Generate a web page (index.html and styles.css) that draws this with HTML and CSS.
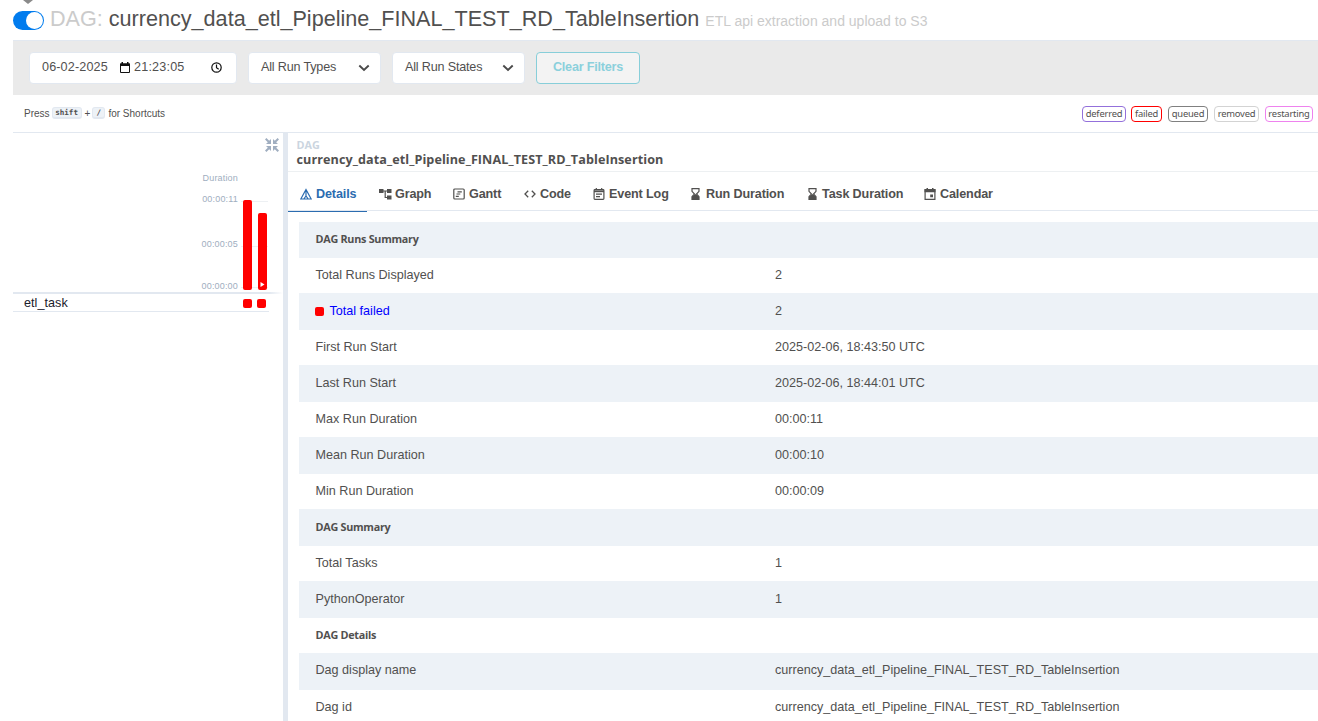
FILE: index.html
```html
<!DOCTYPE html>
<html lang="en">
<head>
<meta charset="utf-8">
<title>currency_data_etl_Pipeline_FINAL_TEST_RD_TableInsertion - Grid</title>
<link rel="stylesheet" href="styles.css">
</head>
<body>
<div class="page">
  <header class="dag-header">
    <span class="caret"></span>
    <span class="switch"><span class="knob"></span></span>
    <h1 class="title"><span class="muted">DAG:</span> <span class="dag-name">currency_data_etl_Pipeline_FINAL_TEST_RD_TableInsertion</span></h1>
    <span class="desc">ETL api extraction and upload to S3</span>
  </header>

  <section class="filters">
    <div class="field datetime">
      <span class="date">06-02-2025</span>
      <svg class="cal" width="10" height="11" viewBox="0 0 10 11"><path d="M.5 2h9v8.500h-9z" fill="none" stroke="#111"/><path d="M0 1.500h10V4H0zM1.500 0h1.500v2H1.500zM7 0h1.500v2H7z" fill="#111"/></svg>
      <span class="time">21:23:05</span>
      <svg class="clock" width="11" height="11" viewBox="0 0 11 11" fill="none" stroke="#111" stroke-width="1.200"><circle cx="5.500" cy="5.500" r="4.700"/><path d="M5.500 2.500v3.200l2.200 1.500"/></svg>
    </div>
    <div class="field select types"><span>All Run Types</span><svg width="12" height="8" viewBox="0 0 12 8"><path d="M1.300 1.500L6 6l4.700-4.500" fill="none" stroke="#4a4a4a" stroke-width="1.900"/></svg></div>
    <div class="field select states"><span>All Run States</span><svg width="12" height="8" viewBox="0 0 12 8"><path d="M1.300 1.500L6 6l4.700-4.500" fill="none" stroke="#4a4a4a" stroke-width="1.900"/></svg></div>
    <button class="clear">Clear Filters</button>
  </section>

  <section class="toolbar">
    <div class="shortcuts"><span>Press</span><kbd class="k-shift">shift</kbd><span>+</span><kbd class="k-slash">/</kbd><span class="for">for Shortcuts</span></div>
    <div class="legend">
      <span class="state deferred">deferred</span>
      <span class="state failed">failed</span>
      <span class="state queued">queued</span>
      <span class="state removed">removed</span>
      <span class="state restarting">restarting</span>
    </div>
  </section>

  <main class="main">
    <aside class="grid">
      <div class="collapse">
        <svg width="14" height="14" viewBox="0 0 14 14"><path d="M.7.7L4 4M13.300.7L10 4M.7 13.300L4 10M13.300 13.300L10 10" fill="none" stroke="#a0aec0" stroke-width="2"/><path d="M6 1v5H1L2.800 4.200 4.200 2.800zM8 1v5h5l-1.800-1.800-1.400-1.400zM6 13V8H1l1.800 1.800 1.400 1.400zM8 13V8h5l-1.800 1.800-1.400 1.400z" fill="#a0aec0"/></svg>
      </div>
      <div class="chart">
        <div class="axis">
          <span class="label">Duration</span>
          <span class="tick">00:00:11</span>
          <span class="tick">00:00:05</span>
          <span class="tick">00:00:00</span>
        </div>
        <div class="plot">
          <div class="bar tall"></div>
          <div class="bar short"><svg width="5" height="5" viewBox="0 0 5 5"><path d="M.5 0L4.500 2.500L.5 5z" fill="#fff"/></svg></div>
        </div>
      </div>
      <div class="task-row"><span class="task-name">etl_task</span><span class="cell"></span><span class="cell"></span></div>
    </aside>
    <div class="divider"></div>
    <section class="details">
      <div class="crumb">
        <span class="crumb-label">DAG</span>
        <span class="crumb-name">currency_data_etl_Pipeline_FINAL_TEST_RD_TableInsertion</span>
      </div>
      <nav class="tabs">
        <a class="tab w1 active"><svg width="12" height="12" viewBox="0 0 12 12" fill="none" stroke="currentColor" stroke-width="1.200"><path d="M6 1.500L11.200 11H.8zM6 2v6M3.800 11L6 8l2.200 3"/></svg><span>Details</span></a>
        <a class="tab w2"><svg width="13" height="12" viewBox="0 0 13 12" fill="currentColor"><path d="M0 1h4.500v4H0zM8 1h4.500v4H8zM8 7.500h4.500v4H8z"/><path d="M4 3h4.500M6.200 3v6.500h2.300" fill="none" stroke="currentColor" stroke-width="1.200"/></svg><span>Graph</span></a>
        <a class="tab w3"><svg width="12" height="12" viewBox="0 0 12 12" fill="none" stroke="currentColor" stroke-width="1.200"><rect x=".8" y="1" width="10.400" height="10" rx="1"/><path d="M4.500 3.800h4.300M3.500 6h3.800M2.800 8.300h3"/></svg><span>Gantt</span></a>
        <a class="tab w4"><svg width="12" height="12" viewBox="0 0 12 12" fill="none" stroke="currentColor" stroke-width="1.300"><path d="M4.200 2.800L1 6l3.200 3.200M7.800 2.800L11 6 7.800 9.200"/></svg><span>Code</span></a>
        <a class="tab w5"><svg width="12" height="12" viewBox="0 0 12 12" fill="none" stroke="currentColor" stroke-width="1.200"><rect x="1.100" y="1.600" width="9.800" height="9.800" rx=".8"/><path d="M1 3.300h10" stroke-width="1.800"/><path d="M3.300 0v2M8.700 0v2M3 6.200h6M3 8.600h4"/></svg><span>Event Log</span></a>
        <a class="tab w6"><svg width="9" height="12" viewBox="0 0 9 12"><path d="M1 .7h7v2.600L5.500 6 8 8.700v2.600H1V8.700L3.500 6 1 3.300z" fill="none" stroke="currentColor" stroke-width="1.200"/><path d="M4.500 6L8 8.500v3H1v-3z" fill="currentColor"/></svg><span>Run Duration</span></a>
        <a class="tab w7"><svg width="9" height="12" viewBox="0 0 9 12"><path d="M1 .7h7v2.600L5.500 6 8 8.700v2.600H1V8.700L3.500 6 1 3.300z" fill="none" stroke="currentColor" stroke-width="1.200"/><path d="M4.500 6L8 8.500v3H1v-3z" fill="currentColor"/></svg><span>Task Duration</span></a>
        <a class="tab w8"><svg width="12" height="12" viewBox="0 0 12 12"><path d="M1.100 1.700h9.800v9.700H1.100z" fill="none" stroke="currentColor" stroke-width="1.200"/><path d="M.5 1.200h11v3H.5zM2.500 0H4v2H2.500zM8 0h1.500v2H8zM6.200 6.500H9v2.800H6.200z" fill="currentColor"/></svg><span>Calendar</span></a>
      </nav>
      <div class="table">
        <div class="row first head"><span>DAG Runs Summary</span></div>
        <div class="row"><span class="key">Total Runs Displayed</span><span>2</span></div>
        <div class="row"><span class="key link"><i class="dot"></i>Total failed</span><span>2</span></div>
        <div class="row"><span class="key">First Run Start</span><span>2025-02-06, 18:43:50 UTC</span></div>
        <div class="row"><span class="key">Last Run Start</span><span>2025-02-06, 18:44:01 UTC</span></div>
        <div class="row"><span class="key">Max Run Duration</span><span>00:00:11</span></div>
        <div class="row"><span class="key">Mean Run Duration</span><span>00:00:10</span></div>
        <div class="row"><span class="key">Min Run Duration</span><span>00:00:09</span></div>
        <div class="row head"><span>DAG Summary</span></div>
        <div class="row"><span class="key">Total Tasks</span><span>1</span></div>
        <div class="row"><span class="key">PythonOperator</span><span>1</span></div>
        <div class="row head"><span>DAG Details</span></div>
        <div class="row up"><span class="key">Dag display name</span><span>currency_data_etl_Pipeline_FINAL_TEST_RD_TableInsertion</span></div>
        <div class="row"><span class="key">Dag id</span><span>currency_data_etl_Pipeline_FINAL_TEST_RD_TableInsertion</span></div>
      </div>
    </section>
  </main>
</div>
</body>
</html>
```
FILE: styles.css
```css
* { box-sizing: border-box; }
html, body { margin: 0; height: 100%; overflow: hidden; }
body {
  background: #fff;
  color: #51504f;
  font-family: "Liberation Sans", Arial, sans-serif;
  font-size: 12.6px;
}
svg { display: block; flex: none; }
.page { height: 721px; padding-left: 13px; display: flex; flex-direction: column; }

.dag-header { position: relative; height: 40px; flex: none; display: flex; white-space: nowrap; }
.caret {
  position: absolute; left: 10px; top: 0;
  border: 5px solid transparent; border-top: 4px solid #8a8a8a; border-bottom: 0;
}
.switch { width: 31px; height: 19px; margin-top: 11px; border-radius: 10px; background: #017cee; padding: 1px; display: flex; justify-content: flex-end; }
.knob { width: 17px; height: 17px; border-radius: 50%; background: #fff; }
.title { margin: 6px 0 0 6px; font-size: 21.6px; line-height: 25px; font-weight: 400; }
.title .muted, .desc { color: #cbcbcb; }
.desc { margin: 12px 0 0 6px; font-size: 14px; line-height: 18px; }

.filters { height: 55px; flex: none; background: #eaeaea; border-top: 1px solid #e2e8f0; padding: 11px 0 0 16px; display: flex; }
.field { height: 32px; background: #fff; border: 1px solid #e2e8f0; border-radius: 4px; display: flex; align-items: center; white-space: nowrap; }
.field span { padding-bottom: 2px; }
.datetime { width: 208px; padding-left: 12px; margin-right: 11px; }
.date { width: 78px; letter-spacing: .14px; }
.cal { margin: 0 4px 1px 0; }
.time { width: 77px; letter-spacing: .19px; }
.clock { margin-bottom: 2px; }
.select { justify-content: space-between; padding: 0 10px 0 12px; letter-spacing: -.18px; }
.types { width: 133px; margin-right: 11px; }
.states { width: 133px; margin-right: 11px; }
.clear {
  width: 104px; height: 32px; padding: 0 0 2px; border: 1px solid #87ced9; border-radius: 4px;
  background: #f3f3f3; color: #8bd0dc; font: bold 12.6px "Liberation Sans", Arial, sans-serif; letter-spacing: -.2px;
}

.toolbar { height: 37px; flex: none; padding: 0 5px 0 11px; display: flex; justify-content: space-between; align-items: center; font-size: 10px; }
.shortcuts { display: flex; align-items: center; white-space: nowrap; }
kbd { height: 12px; background: #edf2f7; border: 1px solid #e2e8f0; border-bottom-width: 2px; border-radius: 3px; font: bold 7.600px/9px "DejaVu Sans Mono", monospace; text-align: center; margin-bottom: 1px; }
.k-shift { width: 30px; margin-left: 2px; margin-right: 3px; }
.k-slash { width: 13px; margin-left: 2px; margin-right: 3px; }
.legend { display: flex; gap: 5px; font: 9.400px "Noto Sans", sans-serif; letter-spacing: -.2px; }
.state { height: 16px; line-height: 13px; border: 1px solid; border-radius: 4px; text-align: center; white-space: nowrap; }
.deferred { width: 44px; border-color: mediumpurple; }
.failed { width: 31px; border-color: red; margin-right: 1px; }
.queued { width: 40px; border-color: gray; margin-right: 1px; }
.removed { width: 45px; border-color: lightgrey; margin-right: 1px; }
.restarting { width: 48px; border-color: violet; }

.main { flex: 1; min-height: 0; display: flex; border-top: 1px solid #e2e8f0; }
.grid { width: 270px; flex: none; }
.collapse { height: 30px; padding: 5px 4px 0 0; display: flex; justify-content: flex-end; }
.chart { height: 131px; display: flex; background: linear-gradient(90deg, #e2e8f0 95%, #fff) 0 100% / 100% 2px no-repeat; }
.axis { width: 225px; display: grid; grid-template-rows: 21px 45px 42px 18px; text-align: right; color: #a0aec0; font-size: 9px; line-height: 12px; padding-top: 9px; letter-spacing: .18px; }
.plot {
  width: 30px; height: 91px; margin: 37px 0 0 3px; padding-left: 2px;
  display: flex; align-items: flex-end; gap: 5px;
  background: linear-gradient(#edf0f3, #edf0f3) 0 1px / 27px 1px no-repeat, linear-gradient(#edf0f3, #edf0f3) 0 46px / 27px 1px no-repeat, linear-gradient(#edf0f3, #edf0f3) 0 87px / 27px 1px no-repeat;
}
.bar { width: 9px; background: red; border-radius: 2px; display: flex; align-items: flex-end; justify-content: center; padding-bottom: 3px; margin-bottom: 1px; }
.bar + .bar { margin-left: 1px; }
.tall { height: 90px; }
.short { height: 77px; }
.task-row { width: 256px; height: 18px; border-bottom: 1px solid #e2e8f0; display: flex; align-items: center; gap: 5px; padding: 0 3px 0 11px; color: #1a202c; }
.task-name { flex: 1; padding-top: 1px; letter-spacing: .05px; }
.cell { width: 9px; height: 9px; margin-top: 1px; border-radius: 2px; background: red; }
.divider { width: 5px; flex: none; background: #e2e8f0; }

.details { flex: 1; min-width: 0; }
.crumb { height: 39px; border-bottom: 1px solid #edf0f2; padding: 5px 0 0 8.500px; display: flex; flex-direction: column; font-family: "Open Sans", "Noto Sans", sans-serif; font-weight: 700; white-space: nowrap; }
.crumb-label { color: #cbd5e0; font-size: 10.800px; line-height: 14px; }
.crumb-name { font-size: 12.600px; line-height: 15px; letter-spacing: .08px; }
.tabs { height: 39px; border-bottom: 1px solid #e2e8f0; display: flex; font-weight: 700; letter-spacing: -.13px; }
.tab { height: 39px; display: flex; align-items: center; gap: 4px; padding: 5px 0 0 12px; white-space: nowrap; flex: none; }
.tab span { margin-top: -1px; }
.active { color: #2b6cb0; box-shadow: 0 1px 0 #2b6cb0; }
.tab svg { margin-top: -1px; }
.w1 { width: 79px; }
.w2 { width: 74px; gap: 3px; }
.w3 { width: 71px; }
.w4 { width: 69px; }
.w5 { width: 98px; }
.w6 { width: 117px; gap: 6px; }
.w7 { width: 116px; gap: 5px; }
.w8 { width: 100px; }

.table { margin: 11px 0 0 11px; }
.row { height: 37px; display: grid; grid-template-columns: 459.500px 1fr; align-items: center; padding: 0 0 2px 16.500px; white-space: nowrap; }
.row:nth-child(odd) { background: #edf2f7; padding-bottom: 1px; }
.row:nth-child(even) { height: 35px; padding-bottom: 1px; }
.row.first { height: 36px; }
.row.head { font: 700 10.800px "Open Sans", "Noto Sans", sans-serif; letter-spacing: -.27px; padding-bottom: 2px; }
.row.first.head { padding-bottom: 3px; }
.row.up { padding-bottom: 4px; }
.key { display: flex; align-items: center; }
.link { color: #00f; }
.dot { width: 9px; height: 9px; margin: 1px 5.500px 0 -.5px; border-radius: 2px; background: red; }
```
